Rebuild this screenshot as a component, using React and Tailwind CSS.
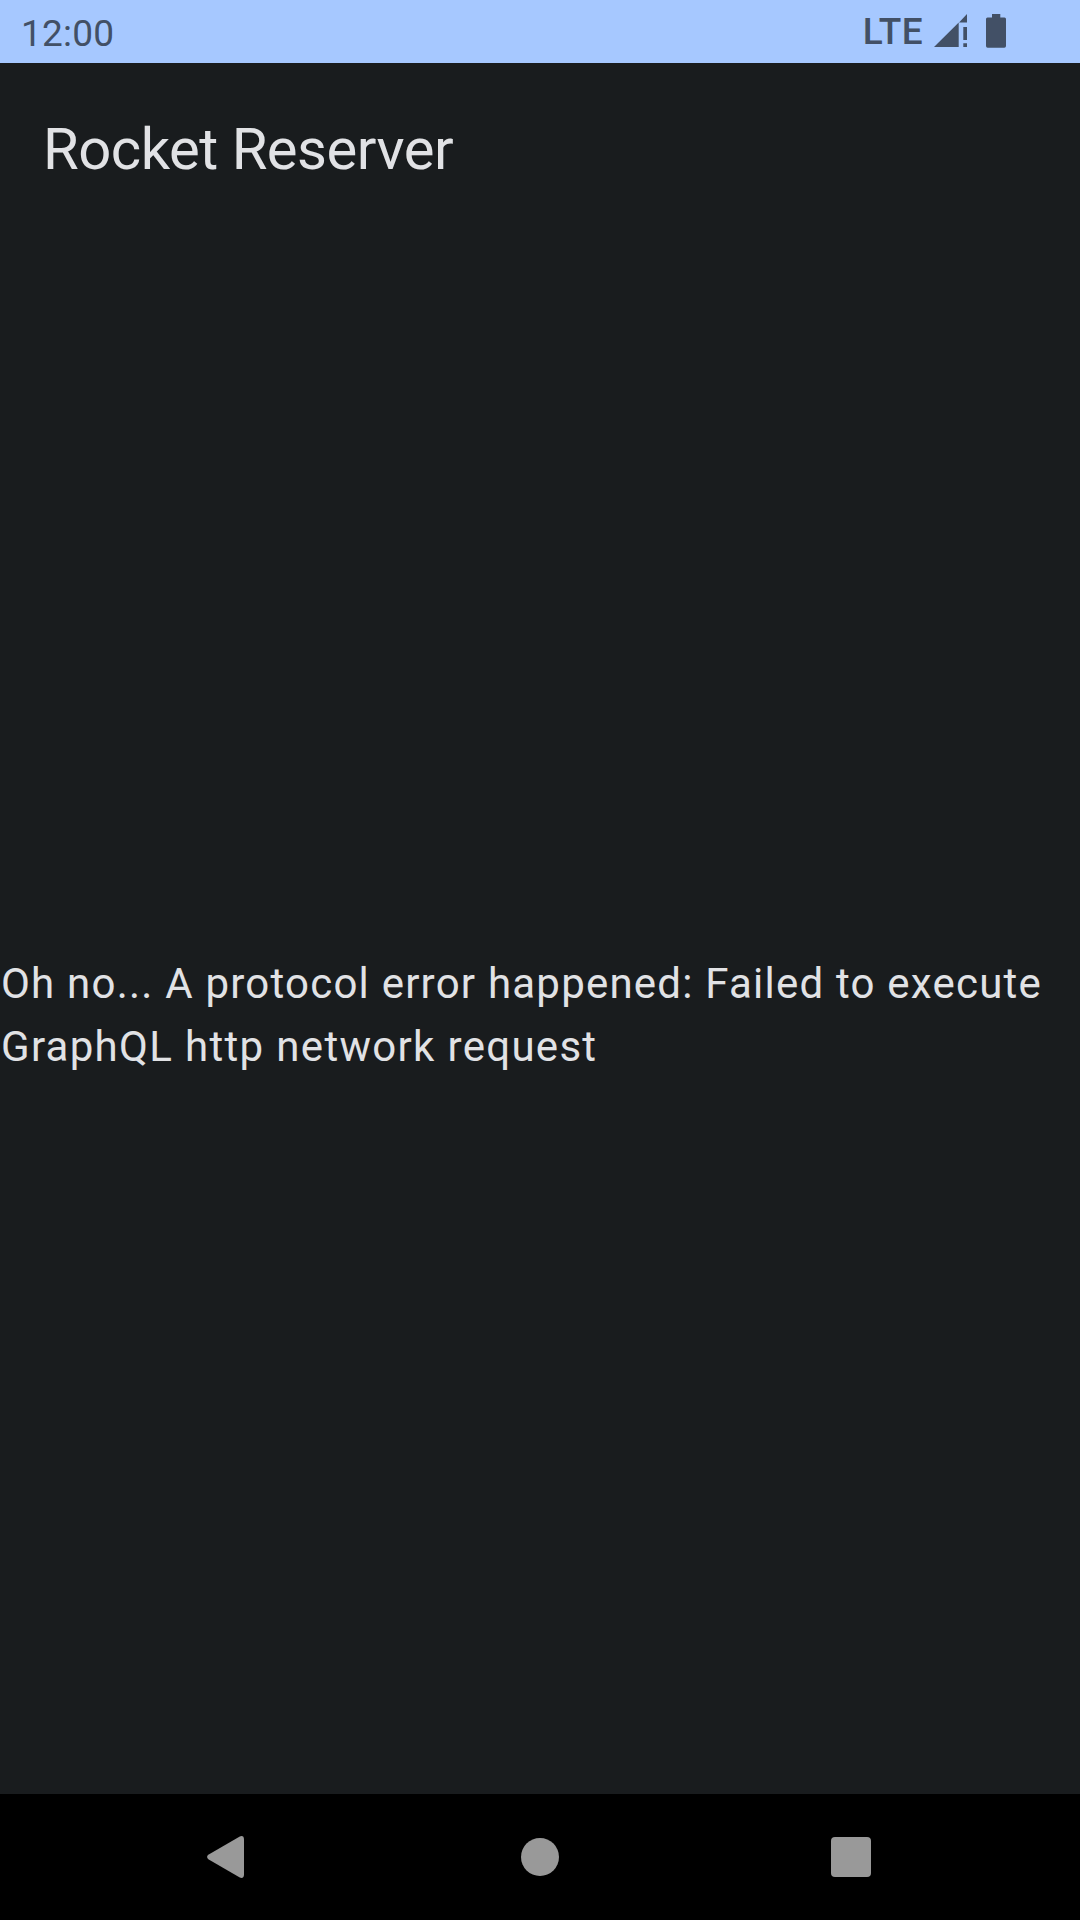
function SignalIcon() {
  return (
    <svg className="ml-[11px] h-[63px] w-[33px]" viewBox="0 0 33 63" fill="currentColor">
      <path d="M0 47L24.7 22.5V47Z M33 14V22.5H25Z M29.3 27H33V40H29.3Z M29.3 43.3H33V47H29.3Z" />
    </svg>
  );
}

function BatteryIcon() {
  return (
    <svg className="ml-[19px] h-[63px] w-[20px]" viewBox="0 0 20 63" fill="currentColor">
      <path d="M6 14h8.3v3.6H18.5q1.5 0 1.5 1.5V46q0 1.7-1.7 1.7H1.7Q0 47.7 0 46V19.1q0-1.5 1.5-1.5H6z" />
    </svg>
  );
}

export default function App() {
  return (
    <div className="flex h-[1920px] w-[1080px] flex-col overflow-hidden bg-[#191c1e] font-['Roboto',sans-serif] text-[#e1e2e5]">
      <header className="flex h-[63px] items-center justify-between bg-[#a6c8ff] pr-[74px] pl-[21px] text-[#425066]">
        <span className="mt-[5px] text-[37px] leading-[44px] tracking-[0.2px]">12:00</span>
        <div className="flex items-center">
          <span className="text-[37px] leading-[44px] font-medium tracking-[0.4px]">LTE</span>
          <SignalIcon />
          <BatteryIcon />
        </div>
      </header>
      <h1 className="flex h-[168px] items-center pt-[4px] pl-[43px] text-[58px] leading-[74px] tracking-[-0.5px]">
        Rocket Reserver
      </h1>
      <main className="flex flex-1 items-center pt-[4px] pl-px">
        <p className="text-[42px] leading-[63px] whitespace-nowrap">
          <span className="block tracking-[1.22px]">Oh no... A protocol error happened: Failed to execute</span>
          <span className="block tracking-[1.28px] [word-spacing:0.3px]">GraphQL http network request</span>
        </p>
      </main>
      <nav className="flex h-[126px] items-center justify-between bg-black pr-[209px] pl-[207px] text-[#999999]">
        <svg className="h-[42px] w-[37px]" viewBox="0 0 37 42" fill="currentColor">
          <path d="M1.3 18.8L32.8 .4Q37 -.9 37 3.5V38.5Q37 42.9 32.8 41.6L1.3 23.2Q-1.1 21 1.3 18.8Z" />
        </svg>
        <div className="ml-[5px] size-[38px] rounded-full bg-[#999999]" />
        <div className="size-[40px] rounded-[4px] bg-[#999999]" />
      </nav>
    </div>
  );
}
